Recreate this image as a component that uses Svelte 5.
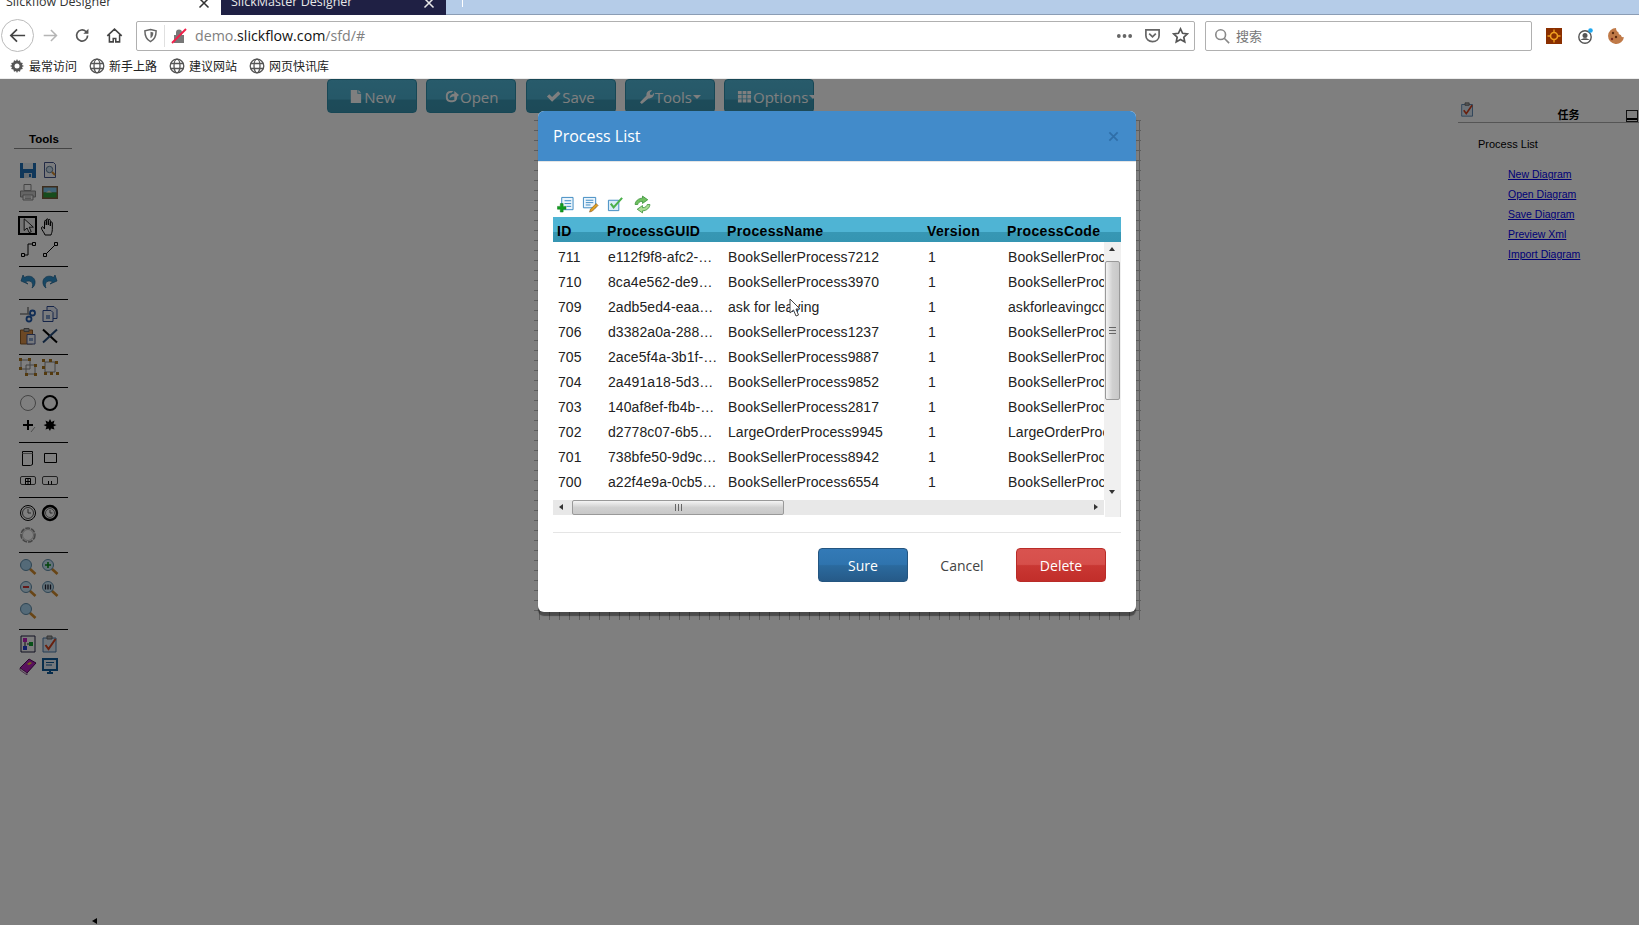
<script>
	const icons = {
		save: '<path d="M1 2h16v15H1z" fill="#1f6fb5"/><path d="M4 2h10v6H4z" fill="#e6eef5"/><path d="M5 12h8v5H5z" fill="#cfd8e0"/><path d="M10 13h2v3h-2z" fill="#1f6fb5"/>',
		preview: '<path d="M3.500 1.500h9l2 2v13h-11z" fill="#f4f6fb" stroke="#44558a"/><circle cx="8.500" cy="8.500" r="3.200" fill="#cfe0ee" stroke="#5c7a98"/><path d="M11 11l3 3" stroke="#d08a2c" stroke-width="2"/>',
		print: '<path d="M5 1.500h7v6H5z" fill="#fff" stroke="#8a8a8a"/><path d="M1.500 8h15v6h-15z" fill="#c8c8c8" stroke="#8a8a8a"/><path d="M4 12h10v5H4z" fill="#f2f2f2" stroke="#8a8a8a"/><path d="M6 14h6M6 15.500h6" stroke="#aaa"/>',
		image: '<path d="M1 3h16v13H1z" fill="#7a5a3a"/><path d="M2.500 4.500h13v5h-13z" fill="#7fc6ee"/><path d="M2.500 9.500h13v5h-13z" fill="#2f9a3a"/><path d="M5 9.500l3-2 3 2z" fill="#e6e6c8"/>',
		select: '<path d="M5 1v14l3.500-3 2.500 5.500 2.500-1-2.500-5.500H16z" fill="#fff" stroke="#000"/>',
		hand: '<path d="M4 17c-1-3-3.500-5-3.500-7s1.800-1.500 3 1V3.500c0-1.500 1.800-1.500 1.800 0v3.500V2c0-1.500 2-1.500 2 0v5V2.500c0-1.500 2-1.500 2 0v5.500-3c0-1.500 2-1.500 2 0v6.500c0 2.500-.8 3.500-1.300 5.500z" fill="#fff" stroke="#000"/>',
		elbow: '<path d="M4 15h5V4h6" fill="none" stroke="#000"/><path d="M2.500 13.500h3v3h-3zM13.500 2.500h3v3h-3z" fill="#fff" stroke="#000"/>',
		line: '<path d="M4 15L15 4" stroke="#000"/><path d="M2.500 13.500h3v3h-3zM13.500 2.500h3v3h-3z" fill="#fff" stroke="#000"/>',
		undo: '<path d="M2 9l2-6 1.500 2.500C9 3 15 4 16 9c.5 3-1 6-3 7 1-2 1-5-1-6.500-2-1-4.500-.5-5.500.5L9 12z" fill="#2f8fc8" stroke="#1c6394" stroke-width=".7"/>',
		redo: '<path d="M16 9l-2-6-1.500 2.500C9 3 3 4 2 9c-.5 3 1 6 3 7-1-2-1-5 1-6.500 2-1 4.500-.5 5.500.5L9 12z" fill="#2f8fc8" stroke="#1c6394" stroke-width=".7"/>',
		cut: '<path d="M1 9h10M9 2v7" stroke="#888" stroke-width="1.600"/><circle cx="13.500" cy="8" r="2.500" fill="none" stroke="#2058a8" stroke-width="1.800"/><circle cx="10" cy="14" r="2.500" fill="none" stroke="#2058a8" stroke-width="1.800"/>',
		copy: '<path d="M6 1.500h7l3 3v9H6z" fill="#e8ecf6" stroke="#2c4a92"/><path d="M2 5.500h8l2 2v9H2z" fill="#f4f6fb" stroke="#2c4a92"/><path d="M5 10h4v4H5z" fill="#7e9ac8"/>',
		paste: '<path d="M1.500 3h12v14h-12z" fill="#d8904a" stroke="#8a5a26"/><path d="M5 1.500h5v3H5z" fill="#aaa" stroke="#666"/><path d="M8 7.500h8v9.500H8z" fill="#eef2fa" stroke="#44558a"/><path d="M10 11h4v3h-4z" fill="#8aa4cc"/>',
		del: '<path d="M2 2.500l14 13" stroke="#000" stroke-width="2"/><path d="M16 2.500l-14 13" stroke="#244a7a" stroke-width="2"/>',
		group: '<path d="M2 2h9v9H2zM7 7h9v9H7z" fill="#fff" stroke="#888"/><path d="M0 0h3v3H0zM9 0h3v3H9zM0 9h3v3H0zM15 15h3v3h-3zM6 15h3v3H6zM15 6h3v3h-3z" fill="#a8741c"/>',
		ungroup: '<path d="M4 4h10v10H4z" fill="#fff" stroke="#888"/><path d="M1 1h3v3H1zM8 1h3v3H8zM14 3h3v3h-3zM1 8h3v3H1zM3 14h3v3H3zM9 14h3v3H9zM15 14h3v3h-3z" fill="#a8741c"/>',
		circleThin: '<circle cx="9" cy="9" r="7.500" fill="#fff" stroke="#888"/>',
		circleBold: '<circle cx="9" cy="9" r="7" fill="#fff" stroke="#000" stroke-width="2"/>',
		plus: '<path d="M9 4v10M4 9h10" stroke="#000" stroke-width="2"/><path d="M16 11l-4 5" stroke="#999"/>',
		burst: '<path d="M9 3l1.500 3 3-1.500-1 3.500 3 1-3 1.500 1 3-3.500-1L9 15l-1.500-2.500-3 1 1-3-3-1.500 3-1-1-3.500 3 1.500z" fill="#000"/>',
		task: '<path d="M3.500 2.500h10v13l-2 1h-8z" fill="#fff" stroke="#000"/><path d="M3.500 4.500h10" stroke="#888"/>',
		rect: '<path d="M3.500 4.500h12v9h-12z" fill="#fff" stroke="#000"/>',
		sub: '<rect x="1.500" y="5.500" width="15" height="8" rx="1.500" fill="#fff" stroke="#444"/><path d="M6.500 7.500h5v6h-5zM9 7.500v6M6.500 10.500h5" fill="none" stroke="#000"/>',
		sub2: '<rect x="1.500" y="5.500" width="15" height="8" rx="1.500" fill="#fff" stroke="#444"/><path d="M7.500 10v3.500M10.500 10v3.500" stroke="#000"/>',
		clock: '<circle cx="9" cy="9" r="7.500" fill="#fff" stroke="#000"/><circle cx="9" cy="9" r="5.500" fill="none" stroke="#555"/><path d="M9 5v4h3" stroke="#555" fill="none"/>',
		clockBold: '<circle cx="9" cy="9" r="7" fill="#fff" stroke="#000" stroke-width="2.400"/><circle cx="9" cy="9" r="4.500" fill="none" stroke="#777"/><path d="M9 6v3h2.500" stroke="#555" fill="none"/>',
		ring: '<circle cx="9" cy="9" r="7" fill="#fff" stroke="#888" stroke-width="1.500" stroke-dasharray="5 1"/><circle cx="9" cy="9" r="5.500" fill="none" stroke="#bbb"/>',
		zoom: '<path d="M10.500 10.500l6 5.500" stroke="#d08a2c" stroke-width="2.600"/><circle cx="7" cy="7" r="5.500" fill="#a8d4f0" stroke="#5c8aa8"/>',
		zoomIn: '<path d="M10.500 10.500l6 5.500" stroke="#d08a2c" stroke-width="2.600"/><circle cx="7" cy="7" r="5.500" fill="#c8e4f4" stroke="#5c8aa8"/><path d="M7 4v6M4 7h6" stroke="#0a8a1a" stroke-width="1.600"/>',
		zoomOut: '<path d="M10.500 10.500l6 5.500" stroke="#d08a2c" stroke-width="2.600"/><circle cx="7" cy="7" r="5.500" fill="#c8e4f4" stroke="#5c8aa8"/><path d="M4 7h6" stroke="#c82020" stroke-width="1.800"/>',
		zoomFit: '<path d="M10.500 10.500l6 5.500" stroke="#d08a2c" stroke-width="2.600"/><circle cx="7" cy="7" r="5.500" fill="#c8e4f4" stroke="#5c8aa8"/><path d="M4.500 4.500v5M7 4.500v5M9.500 4.500v5" stroke="#223" stroke-width="1.300"/>',
		palette: '<path d="M2 1h14v16H2z" fill="#f8f8f8" stroke="#224"/><path d="M4 3h4v4H4z" fill="#c020c0"/><path d="M10 7h4v4h-4z" fill="#10a030"/><path d="M4 11h4v4H4z" fill="#2040d0"/><path d="M6 7v4M8 9h2" stroke="#222"/>',
		check: '<path d="M2 3h13v14H2z" fill="#dce8f4" stroke="#4a7aa8"/><path d="M6 1h5v3H6z" fill="#aaa" stroke="#666"/><path d="M4.500 10l3 4 7-10" fill="none" stroke="#d0401c" stroke-width="2"/>',
		book: '<path d="M1 11l9-9 7 4-9 10z" fill="#b020b8" stroke="#500858"/><path d="M1 11l7 5v2l-7-5z" fill="#f4e4f4" stroke="#500858" stroke-width=".6"/><path d="M8 7l3-2 2 1-3 2z" fill="#f0d020"/>',
		monitor: '<path d="M2 2h14v11H2z" fill="#e8f0f8" stroke="#0f5a98" stroke-width="2"/><path d="M5 5.500h8M5 8h6" stroke="#0f5a98"/><path d="M6 16h6M9 13v3" stroke="#0f5a98" stroke-width="2"/>'
	};

	const sections = [
		{ pt: 0, pb: 8, rows: [["save", "preview"], ["print", "image"]] },
		{ pt: 4, pb: 6, rows: [["select", "hand"], ["elbow", "line"]] },
		{ pt: 3, pb: 7, rows: [["undo", "redo"]] },
		{ pt: 3, pb: 7, rows: [["cut", "copy"], ["paste", "del"]] },
		{ pt: 1, pb: 9, rows: [["group", "ungroup"]] },
		{ pt: 4, pb: 6, rows: [["circleThin", "circleBold"], ["plus", "burst"]] },
		{ pt: 4, pb: 6, rows: [["task", "rect"], ["sub", "sub2"]] },
		{ pt: 4, pb: 6, rows: [["clock", "clockBold"], ["ring"]] },
		{ pt: 3, pb: 7, rows: [["zoom", "zoomIn"], ["zoomOut", "zoomFit"], ["zoom"]] },
		{ pt: 3, pb: 0, rows: [["palette", "check"], ["book", "monitor"]] }
	];

	const buttons = [
		{ label: "New", glyph: "file" },
		{ label: "Open", glyph: "share" },
		{ label: "Save", glyph: "ok" },
		{ label: "Tools", glyph: "wrench", caret: true },
		{ label: "Options", glyph: "th", caret: true }
	];

	const bookmarks = ["新手上路", "建议网站", "网页快讯库"];
	const links = ["New Diagram", "Open Diagram", "Save Diagram", "Preview Xml", "Import Diagram"];

	const rows = [
		["711", "e112f9f8-afc2-…", "BookSellerProcess7212", "BookSellerProcess"],
		["710", "8ca4e562-de9…", "BookSellerProcess3970", "BookSellerProcess"],
		["709", "2adb5ed4-eaa…", "ask for leaving", "askforleavingcode"],
		["706", "d3382a0a-288…", "BookSellerProcess1237", "BookSellerProcess"],
		["705", "2ace5f4a-3b1f-…", "BookSellerProcess9887", "BookSellerProcess"],
		["704", "2a491a18-5d3…", "BookSellerProcess9852", "BookSellerProcess"],
		["703", "140af8ef-fb4b-…", "BookSellerProcess2817", "BookSellerProcess"],
		["702", "d2778c07-6b5…", "LargeOrderProcess9945", "LargeOrderProcess"],
		["701", "738bfe50-9d9c…", "BookSellerProcess8942", "BookSellerProcess"],
		["700", "a22f4e9a-0cb5…", "BookSellerProcess6554", "BookSellerProcess"]
	];
</script>

{#snippet globe()}
	<svg class="bm-icon" viewBox="0 0 16 16" fill="none" stroke="#555" stroke-width="1.300">
		<circle cx="8" cy="8" r="6.800" />
		<ellipse cx="8" cy="8" rx="3" ry="6.800" />
		<path d="M1.500 5.500h13M1.500 10.500h13" />
	</svg>
{/snippet}

{#snippet close()}
	<svg class="tab-x" viewBox="0 0 12 12" fill="none" stroke="currentColor" stroke-width="1.500">
		<path d="M1.500 1.500l9 9M10.500 1.500l-9 9" />
	</svg>
{/snippet}

{#snippet glyph(name)}
	<svg class="glyph" viewBox="0 0 16 16" fill="currentColor">
		{#if name === "file"}
			<path d="M3 1h7v4h4v10H3zM11 1l3 3h-3z" />
		{:else if name === "share"}
			<path d="M2 7c0-3 2-5 5-5h3l-2 2H7C5.500 4 4 5.500 4 7v2c0 1.500 1.500 3 3 3h2c1.500 0 3-1.500 3-3v-1l2-2v3c0 3-2 5-5 5H7c-3 0-5-2-5-5zM6 10c0-3 2-5 5-5V2l5 4.500L11 11V8c-2 0-4 .5-5 2z" />
		{:else if name === "ok"}
			<path d="M1 8l2.500-2.500L6.500 8.500 13 2.500 15.500 5l-9 8.500z" />
		{:else if name === "wrench"}
			<path d="M1 14L8 7C7.500 4 10 1 14 1.500L11.500 4l.5 2 2 .5L16 4c.5 4-2.500 6.500-6 6L3 16z" />
		{:else}
			<path d="M1 2h4v3.500H1zM6 2h4v3.500H6zM11 2h4v3.500h-4zM1 6.500h4V10H1zM6 6.500h4V10H6zM11 6.500h4V10h-4zM1 11h4v3.500H1zM6 11h4v3.500H6zM11 11h4v3.500h-4z" />
		{/if}
	</svg>
{/snippet}

<div class="browser">
	<div class="tabs">
		<div class="tab active">
			<span>Slickflow Designer</span>
			{@render close()}
		</div>
		<div class="tab dark">
			<span>SlickMaster Designer</span>
			{@render close()}
		</div>
		<div class="new-tab"></div>
	</div>

	<div class="nav">
		<div class="back">
			<svg viewBox="0 0 20 20" fill="none" stroke="#444" stroke-width="1.800"><path d="M18 10H3M9.500 3.500L3 10l6.500 6.500" /></svg>
		</div>
		<svg class="nav-icon" viewBox="0 0 20 20" fill="none" stroke="#b5b5b5" stroke-width="1.800"><path d="M2 10h15M10.500 3.500L17 10l-6.500 6.500" /></svg>
		<svg class="nav-icon" viewBox="0 0 20 20" fill="none" stroke="#555" stroke-width="2"><path d="M16 10a6.500 6.500 0 1 1-2-4.700L16 7" /><path d="M17 2v6h-6z" fill="#555" stroke="none" /></svg>
		<svg class="nav-icon" viewBox="0 0 20 20" fill="none" stroke="#444" stroke-width="1.800"><path d="M1.500 10.500L10 2.500l8.500 8M4 9v8.500h4.500v-4h3v4H16V9" /></svg>

		<div class="urlbar">
			<svg class="shield" viewBox="0 0 16 16" fill="none" stroke="#666" stroke-width="1.600"><path d="M8 1.500l6 1.500c0 6-1.500 9.500-6 11.500C3.500 12.500 2 9 2 3z" /><path d="M8 4l3 .8c0 3-.8 5-3 6.200z" fill="#666" stroke="none" /></svg>
			<span class="url-sep"></span>
			<svg class="lock" viewBox="0 0 16 16"><path d="M3 7h10v8H3zM5 7V4.500a3 3 0 0 1 6 0V7" fill="#777" /><path d="M1 15L15 1" stroke="#f0204a" stroke-width="2" /></svg>
			<span class="url"><span class="dim">demo.</span>slickflow.com<span class="dim">/sfd/#</span></span>
			<span class="url-actions">
				<svg viewBox="0 0 18 6" class="dots" fill="#666"><circle cx="3" cy="3" r="2" /><circle cx="9" cy="3" r="2" /><circle cx="15" cy="3" r="2" /></svg>
				<svg viewBox="0 0 18 18" fill="none" stroke="#666" stroke-width="1.800"><path d="M2 3h14v6c0 4-3 6.500-7 6.500S2 13 2 9z" /><path d="M5.500 7L9 10.500 12.500 7" /></svg>
				<svg viewBox="0 0 18 18" fill="none" stroke="#555" stroke-width="1.800"><path d="M9 2l2.200 4.700 5 .6-3.700 3.500 1 5L9 13.300l-4.500 2.500 1-5L1.800 7.300l5-.6z" /></svg>
			</span>
		</div>

		<div class="searchbar">
			<svg viewBox="0 0 18 18" fill="none" stroke="#888" stroke-width="1.800"><circle cx="7.500" cy="7.500" r="5.500" /><path d="M11.500 11.500L17 17" /></svg>
			<span>搜索</span>
		</div>

		<div class="addons">
			<svg viewBox="0 0 16 16"><path d="M0 0h16v16H0z" fill="#8a2f00" /><circle cx="8" cy="8" r="3.500" fill="none" stroke="#f0a020" stroke-width="1.600" /><path d="M8 1.500v3M8 11.500v3M1.500 8h3M11.500 8h3" stroke="#f0a020" stroke-width="1.300" /></svg>
			<svg viewBox="0 0 16 16"><circle cx="8" cy="9" r="6.200" fill="#fff" stroke="#555" stroke-width="1.400" /><circle cx="8" cy="7.500" r="2.500" fill="#555" /><path d="M3.500 12c2-2.500 7-2.500 9 0" fill="#555" /><circle cx="13.500" cy="2.500" r="2.300" fill="#1fa8f0" /></svg>
			<svg viewBox="0 0 16 16"><path d="M8 0a8 8 0 1 0 8 9c-2 1-3-1-3-2-2 0-3-2-2.500-3C9 4 8 2 8 0z" fill="#c07a48" /><circle cx="5" cy="5" r="1.200" fill="#5a2c10" /><circle cx="8" cy="9" r="1.200" fill="#5a2c10" /><circle cx="4" cy="11" r="1.200" fill="#7a2c20" /></svg>
		</div>
	</div>

	<div class="bookmarks">
		<span class="bookmark">
			<svg class="bm-icon" viewBox="0 0 16 16"><path d="M8 1l1 2 2-.8.6 2.200 2.200.6L13 7l2 1-2 1 .8 2-2.200.6L11 13.800 9 13l-1 2-1-2-2 .8-.6-2.200L2.200 11 3 9 1 8l2-1-.8-2 2.200-.6L5 2.200 7 3z" fill="#555" /><circle cx="8" cy="8" r="2.500" fill="#fff" /></svg>
			最常访问
		</span>
		{#each bookmarks as bookmark}
			<span class="bookmark">
				{@render globe()}
				{bookmark}
			</span>
		{/each}
	</div>
</div>

<main class="page">
	<aside class="tools">
		<h4>Tools</h4>
		{#each sections as section}
			<div class="tool-section" style="padding-top: {section.pt}px; padding-bottom: {section.pb}px">
				{#each section.rows as row}
					<div class="tool-row">
						{#each row as name}
							<span class="tool" class:selected={name === "select"}>
								<svg viewBox="0 0 18 18">{@html icons[name]}</svg>
							</span>
						{/each}
					</div>
				{/each}
			</div>
		{/each}
	</aside>

	<section class="center">
		<div class="buttons">
			{#each buttons as button}
				<button class="btn-info">
					{@render glyph(button.glyph)}{button.label}{#if button.caret}<span class="caret"></span>{/if}
				</button>
			{/each}
		</div>
		<div class="canvas"></div>
	</section>

	<aside class="panel">
		<div class="panel-head">
			<svg class="panel-icon" viewBox="0 0 18 18">{@html icons.check}</svg>
			<span class="panel-title">任务</span>
			<span class="minimize"></span>
		</div>
		<div class="panel-label">Process List</div>
		<ul class="panel-links">
			{#each links as link}
				<li><a href="#top">{link}</a></li>
			{/each}
		</ul>
	</aside>

	<div class="scroll-left"></div>
	<div class="backdrop"></div>

	<div class="modal">
		<header class="modal-head">
			<h3>Process List</h3>
			<svg class="modal-x" viewBox="0 0 12 12" fill="none" stroke="currentColor" stroke-width="1.800"><path d="M1.500 1.500l9 9M10.500 1.500l-9 9" /></svg>
		</header>

		<div class="modal-body">
			<div class="grid-toolbar">
				<svg viewBox="0 0 18 18"><path d="M5 1.500h12v13H5z" fill="#eaf4fc" stroke="#3a88c0" /><path d="M8 5h7M8 8h7M10 11h5" stroke="#3a88c0" /><path d="M3.500 8h3v3h3v3h-3v3h-3v-3h-3v-3h3z" fill="#10a020" stroke="#0a7014" stroke-width=".5" /></svg>
				<svg viewBox="0 0 18 18"><path d="M1.500 1.500h13v11h-13z" fill="#eaf4fc" stroke="#3a88c0" /><path d="M4 4.500h8M4 7h8M4 9.500h5" stroke="#3a88c0" /><path d="M9 14l6-6 2 2-6 6-3 1z" fill="#e0a020" stroke="#7a4a10" stroke-width=".6" /></svg>
				<svg viewBox="0 0 18 18"><path d="M1.500 4.500h11v11h-11z" fill="#d8ecf8" stroke="#3a88c0" /><path d="M4 8l3 4 9-10" fill="none" stroke="#4ab04a" stroke-width="2.200" /></svg>
				<svg class="wide" viewBox="0 0 18 18"><path d="M2 9c0-3 3-6 7-6V1l5 3.500L9 8V6C6 6 5 7.500 4.500 9z" fill="#70c060" stroke="#308a30" stroke-width=".7" /><path d="M16 9c0 3-3 6-7 6v2l-5-3.500L9 10v2c3 0 4-1.500 4.500-3z" fill="#a8dc90" stroke="#308a30" stroke-width=".7" /></svg>
			</div>

			<div class="grid">
				<div class="grid-head grid-cols">
					<span>ID</span>
					<span>ProcessGUID</span>
					<span>ProcessName</span>
					<span>Version</span>
					<span>ProcessCode</span>
				</div>
				<div class="grid-main">
					<div class="grid-rows">
						{#each rows as row}
							<div class="grid-row grid-cols">
								<span>{row[0]}</span>
								<span>{row[1]}</span>
								<span>{row[2]}</span>
								<span>1</span>
								<span>{row[3]}</span>
							</div>
						{/each}
					</div>
					<div class="vscroll">
						<span class="arrow up"></span>
						<div class="vthumb"><span class="grip-h"></span></div>
						<span class="arrow down"></span>
					</div>
				</div>
				<div class="grid-foot">
					<div class="hscroll">
						<span class="arrow left"></span>
						<div class="hthumb"><span class="grip-v"></span></div>
						<span class="arrow right"></span>
					</div>
					<div class="corner"></div>
				</div>
				<svg class="cursor" viewBox="0 0 12 19"><path d="M1 1v14l3.500-3 2.500 6 2.500-1-2.500-6H11z" fill="#fff" stroke="#444" /></svg>
			</div>

			<footer class="modal-foot">
				<button class="btn sure">Sure</button>
				<button class="btn cancel">Cancel</button>
				<button class="btn delete">Delete</button>
			</footer>
		</div>
	</div>
</main>

<style>
	:global(body) {
		margin: 0;
		background: #fff;
		overflow: hidden;
	}

	.browser {
		font-family: "Open Sans", "Noto Sans CJK SC", sans-serif;
		color: #222;
	}

	.tabs {
		display: flex;
		height: 15px;
		overflow: hidden;
		background: #b5cce8;
		box-shadow: inset 0 -1px 0 #8b9db5;
		font-size: 12.500px;
	}

	.tab {
		display: flex;
		align-items: center;
		justify-content: space-between;
		box-sizing: border-box;
		height: 15px;
		padding: 0 11px 0 6px;
	}

	.tab span {
		margin-top: -13px;
	}

	.tab.active {
		width: 221px;
		background: #fff;
		color: #333;
	}

	.tab.dark {
		width: 225px;
		background: #1f2044;
		color: #e8e8e8;
		padding-left: 10px;
	}

	.tab-x {
		width: 12px;
		height: 12px;
		margin-top: -9px;
	}

	.new-tab {
		width: 1px;
		height: 7px;
		margin-left: 16px;
		background: #fff;
	}

	.nav {
		display: flex;
		align-items: center;
		height: 36px;
		padding-top: 5px;
		box-sizing: border-box;
	}

	.back {
		display: flex;
		align-items: center;
		justify-content: center;
		box-sizing: border-box;
		width: 33px;
		height: 33px;
		margin-left: 1px;
		border: 1px solid #bbb;
		border-radius: 50%;
	}

	.back svg {
		width: 19px;
		height: 19px;
	}

	.nav-icon {
		width: 17px;
		height: 17px;
		margin-left: 15px;
	}

	.nav-icon:first-of-type {
		margin-left: 8px;
	}

	.urlbar {
		display: flex;
		align-items: center;
		box-sizing: border-box;
		width: 1059px;
		height: 30px;
		margin-left: 13px;
		padding-left: 6px;
		border: 1px solid #b0b0b0;
		border-radius: 2px;
	}

	.shield {
		width: 15px;
		height: 15px;
	}

	.url-sep {
		width: 1px;
		height: 22px;
		margin: 0 6px;
		background: #e0e0e0;
	}

	.lock {
		width: 16px;
		height: 16px;
	}

	.url {
		margin-left: 8px;
		font-size: 14.200px;
		color: #111;
	}

	.dim {
		color: #808080;
	}

	.url-actions {
		display: flex;
		align-items: center;
		gap: 11px;
		margin-left: auto;
		padding-right: 5px;
	}

	.url-actions svg {
		width: 17px;
		height: 17px;
	}

	.url-actions .dots {
		height: 6px;
	}

	.searchbar {
		display: flex;
		align-items: center;
		box-sizing: border-box;
		width: 327px;
		height: 30px;
		margin-left: 10px;
		padding-left: 8px;
		border: 1px solid #b0b0b0;
		border-radius: 2px;
		font-size: 13px;
		color: #777;
	}

	.searchbar svg {
		width: 16px;
		height: 16px;
		margin-right: 6px;
	}

	.addons {
		display: flex;
		align-items: center;
		gap: 15px;
		margin-left: 14px;
	}

	.addons svg {
		width: 16px;
		height: 16px;
	}

	.bookmarks {
		display: flex;
		align-items: center;
		height: 28px;
		padding-top: 2px;
		padding-left: 9px;
		box-sizing: border-box;
		border-bottom: 1px solid #ececec;
		font-size: 12px;
		gap: 12px;
	}

	.bookmark {
		display: flex;
		align-items: center;
		gap: 4px;
	}

	.bm-icon {
		width: 16px;
		height: 16px;
	}

	.page {
		position: relative;
		display: flex;
		height: 846px;
		overflow: hidden;
		background: #fff;
		font-family: "Liberation Sans", sans-serif;
	}

	.tools {
		box-sizing: border-box;
		width: 90px;
		padding-top: 53px;
		flex: none;
	}

	.tools h4 {
		margin: 0 18px 10px 14px;
		padding: 0 0 2px 2px;
		border-bottom: 1px solid #888;
		text-align: center;
		font-size: 11.500px;
		line-height: 14px;
		color: #000;
	}

	.tool-section {
		margin: 0 22px 0 19px;
		border-bottom: 1px solid #000;
	}

	.tool-section:last-child {
		border-bottom: 0;
	}

	.tool-row {
		display: flex;
		height: 22px;
		margin-left: -2px;
	}

	.tool {
		display: flex;
		align-items: center;
		justify-content: center;
		flex: none;
		width: 22px;
		height: 22px;
		box-sizing: border-box;
	}

	.tool svg {
		width: 18px;
		height: 18px;
		flex: none;
	}

	.tool.selected {
		border: 2px solid #000;
		background: #e8e8e8;
		width: 19px;
		height: 19px;
		margin: 0 2px 0 1px;
	}

	.tool.selected svg {
		width: 15px;
		height: 15px;
	}

	.center {
		flex: 1;
		padding-left: 237px;
	}

	.buttons {
		display: flex;
		gap: 9.250px;
	}

	.btn-info {
		display: flex;
		align-items: center;
		justify-content: center;
		flex: none;
		width: 90px;
		height: 34px;
		padding: 1px 0 0;
		border: 1px solid #2f8fab;
		border-radius: 4px;
		background: linear-gradient(to bottom, #50b6d6 0, #4cb0d0 60%, #3a97b4 62%, #3a94b0 100%);
		color: #fff;
		font-family: "Open Sans", sans-serif;
		font-size: 15px;
		white-space: nowrap;
	}

	.btn-info:last-child {
		justify-content: flex-start;
		padding-left: 12px;
	}

	.glyph {
		width: 15px;
		height: 15px;
		flex: none;
		margin-right: 1px;
	}

	.caret {
		width: 0;
		height: 0;
		flex: none;
		margin-left: 1px;
		border-top: 4px solid #fff;
		border-left: 4px solid transparent;
		border-right: 4px solid transparent;
	}

	.canvas {
		box-sizing: border-box;
		width: 607px;
		height: 500px;
		margin: 7px 0 0 207px;
		background-image:
			repeating-linear-gradient(to right, #bbb 0 1px, transparent 1px 10px),
			repeating-linear-gradient(to bottom, #bbb 0 1px, transparent 1px 10px);
		background-position: 5px 0, 0 0;
	}

	.panel {
		box-sizing: border-box;
		width: 181px;
		flex: none;
		padding-top: 23px;
		color: #000;
	}

	.panel-head {
		position: relative;
		display: flex;
		justify-content: center;
		align-items: flex-end;
		height: 20px;
		border-bottom: 1px solid #aaa;
		font-family: "Noto Sans CJK SC", sans-serif;
		font-size: 11px;
		font-weight: 700;
	}

	.panel-title {
		margin-left: 40px;
		line-height: 15px;
	}

	.panel-icon {
		position: absolute;
		left: 2px;
		top: 0;
		width: 15px;
		height: 15px;
	}

	.minimize {
		position: absolute;
		right: 1px;
		bottom: 0;
		box-sizing: border-box;
		width: 12px;
		height: 12px;
		border: 1px solid #222;
		background: linear-gradient(to bottom, #fff 0 7px, #000 7px 9px, #fff 9px);
	}

	.panel-label {
		margin: 15px 0 0 20px;
		font-size: 11px;
		line-height: 13px;
	}

	.panel-links {
		margin: 13px 0 0 50px;
		padding: 0;
		list-style: none;
		font-size: 10.500px;
		line-height: 20px;
	}

	.panel-links a {
		color: #0000ee;
	}

	.scroll-left {
		position: absolute;
		left: 92px;
		bottom: 1px;
		width: 0;
		height: 0;
		border-top: 3px solid transparent;
		border-bottom: 3px solid transparent;
		border-right: 5px solid #000;
	}

	.backdrop {
		position: absolute;
		inset: 0;
		background: rgba(0, 0, 0, 0.5);
	}

	.modal {
		position: absolute;
		left: 538px;
		top: 32px;
		width: 598px;
		border-radius: 6px;
		background: #fff;
		box-shadow: 0 4px 1px rgba(0, 0, 0, 0.4);
		color: #333;
	}

	.modal-head {
		display: flex;
		align-items: center;
		justify-content: space-between;
		height: 50px;
		padding: 0 17px 0 15px;
		border-bottom: 1px solid #e5e5e5;
		border-radius: 6px 6px 0 0;
		background: #428bca;
		color: #2f6ea8;
	}

	.modal-head h3 {
		margin: 0;
		font-family: "Open Sans", sans-serif;
		font-size: 16px;
		font-weight: 400;
		color: #fff;
	}

	.modal-x {
		width: 11px;
		height: 11px;
	}

	.modal-body {
		padding: 33px 15px 30px;
	}

	.grid-toolbar {
		display: flex;
		gap: 8px;
		height: 22px;
		padding: 1px 0 0 4px;
		box-sizing: border-box;
	}

	.grid-toolbar svg {
		width: 17px;
		height: 17px;
	}

	.grid-toolbar .wide {
		width: 19px;
		height: 19px;
		margin: -1px 0 0 1px;
	}

	.grid {
		position: relative;
		font-size: 14px;
		letter-spacing: 0.080px;
	}

	.grid-cols {
		display: grid;
		grid-template-columns: 50px 120px 200px 80px 1fr;
	}

	.grid-cols span {
		overflow: hidden;
		white-space: nowrap;
		padding-left: 5px;
	}

	.grid-head {
		height: 25px;
		line-height: 28px;
		background: linear-gradient(to bottom, #4fb4d4 0, #4fb4d4 58%, #3797b4 62%, #3595b2 100%);
		font-weight: 700;
		color: #000;
		letter-spacing: 0.350px;
	}

	.grid-head span {
		padding-left: 4px;
	}

	.grid-main {
		display: flex;
		height: 258px;
	}

	.grid-rows {
		width: 551px;
		padding-top: 3px;
		overflow: hidden;
	}

	.grid-row {
		grid-template-columns: 50px 120px 200px 80px 101px;
		height: 25px;
		line-height: 25px;
		color: #222;
	}

	.vscroll {
		position: relative;
		width: 17px;
		box-sizing: border-box;
		background: #f0f0f0;
	}

	.vthumb {
		position: absolute;
		top: 19px;
		left: 1px;
		box-sizing: border-box;
		width: 15px;
		height: 139px;
		display: flex;
		align-items: center;
		justify-content: center;
		border: 1px solid #999;
		border-radius: 2px;
		background: linear-gradient(to right, #f4f4f4, #d0d0d0 50%, #c8c8c8);
	}

	.grip-h {
		width: 7px;
		height: 5px;
		border-top: 1px solid #666;
		border-bottom: 1px solid #666;
		background: linear-gradient(#666, #666) center / 100% 1px no-repeat;
	}

	.arrow {
		position: absolute;
		width: 0;
		height: 0;
	}

	.arrow.up {
		top: 5px;
		left: 5px;
		border-left: 3px solid transparent;
		border-right: 3px solid transparent;
		border-bottom: 4px solid #333;
	}

	.arrow.down {
		bottom: 6px;
		left: 5px;
		border-left: 3px solid transparent;
		border-right: 3px solid transparent;
		border-top: 4px solid #333;
	}

	.grid-foot {
		display: flex;
		height: 17px;
		justify-content: space-between;
	}

	.hscroll {
		position: relative;
		width: 551px;
		height: 15px;
		background: #e8e8e8;
	}

	.hthumb {
		position: absolute;
		left: 19px;
		top: 0;
		box-sizing: border-box;
		width: 212px;
		height: 15px;
		display: flex;
		align-items: center;
		justify-content: center;
		border: 1px solid #999;
		border-radius: 2px;
		background: linear-gradient(to bottom, #f4f4f4, #d0d0d0 50%, #c8c8c8);
	}

	.grip-v {
		width: 5px;
		height: 7px;
		border-left: 1px solid #666;
		border-right: 1px solid #666;
		background: linear-gradient(#666, #666) center / 1px 100% no-repeat;
	}

	.arrow.left {
		top: 4px;
		left: 6px;
		border-top: 3px solid transparent;
		border-bottom: 3px solid transparent;
		border-right: 4px solid #333;
	}

	.arrow.right {
		top: 4px;
		right: 6px;
		border-top: 3px solid transparent;
		border-bottom: 3px solid transparent;
		border-left: 4px solid #333;
	}

	.corner {
		width: 16px;
		background: #f0f0f0;
		border-right: 1px solid #e0e0e0;
		box-sizing: border-box;
	}

	.cursor {
		position: absolute;
		left: 236px;
		top: 81px;
		width: 12px;
		height: 19px;
	}

	.modal-foot {
		display: flex;
		justify-content: flex-end;
		margin-top: 15px;
		padding: 15px 15px 0 0;
		border-top: 1px solid #e5e5e5;
	}

	.btn {
		width: 90px;
		height: 34px;
		padding: 0;
		border: 1px solid transparent;
		border-radius: 4px;
		background: none;
		font-family: "Open Sans", sans-serif;
		font-size: 14px;
		color: #fff;
	}

	.sure {
		margin-right: 9px;
		border-color: #245580;
		background: linear-gradient(to bottom, #337ab7 0, #2f74ae 48%, #2b6a9e 52%, #265a88 100%);
	}

	.cancel {
		margin-right: 9px;
		color: #444;
	}

	.delete {
		border-color: #b92c28;
		background: linear-gradient(to bottom, #d9534f 0, #d64f4b 48%, #c93733 52%, #c12e2a 100%);
	}
</style>
